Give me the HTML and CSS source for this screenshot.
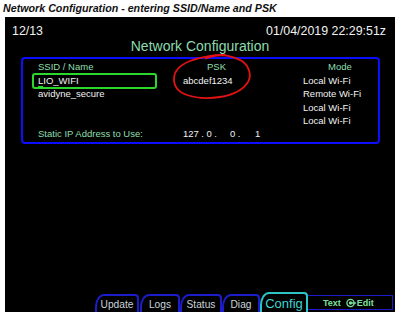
FILE: index.html
```html
<!DOCTYPE html>
<html lang="en">
<head>
    <meta charset="UTF-8">
    <meta name="viewport" content="width=device-width, initial-scale=1.0">
    <title>Network Configuration</title>
    <link rel="stylesheet" href="styles.css">
</head>
<body>

    <div class="caption">Network Configuration - entering SSID/Name and PSK</div>

    <div class="screen">
        <div class="topbar">
            <span>12/13</span>
            <span>01/04/2019 22:29:51z</span>
        </div>

        <div class="title">Network Configuration</div>

        <div class="panel">
            <div class="head">SSID / Name</div>
            <div class="head psk-head">PSK</div>
            <div class="head mode-head">Mode</div>

            <div><span class="sel"><span class="cursor">L</span>IO_WIFI</span></div>
            <div>abcdef1234</div>
            <div>Local Wi-Fi</div>

            <div>avidyne_secure</div>
            <div></div>
            <div>Remote Wi-Fi</div>

            <div></div>
            <div></div>
            <div>Local Wi-Fi</div>

            <div></div>
            <div></div>
            <div>Local Wi-Fi</div>

            <div class="label">Static IP Address to Use:</div>
            <div class="ip">
                <span>127</span><span>.</span><span>0</span><span>.</span><span class="far">0</span><span>.</span><span class="far last">1</span>
            </div>
            <div></div>
        </div>

        <!-- hand-drawn annotation around the PSK field -->
        <svg class="scribble" width="95" height="52" viewBox="0 0 95 52">
            <path d="M60,4 C50,3.5 35,6 25,10 C15,14 9,20 9,28 C9,36 13,41 22,44 C32,47.5 45,47.5 55,46 C68,44 78,39 83,31 C87,24 84,15 77,10 C70,6 62,3.5 52,4.5 C47,5 44,6 41,7.5"
                  fill="none" stroke="#e41212" stroke-width="1.8" stroke-linecap="round"/>
        </svg>

        <div class="tabs">
            <div class="tab t-update">Update</div>
            <div class="tab t-logs">Logs</div>
            <div class="tab t-status">Status</div>
            <div class="tab t-diag">Diag</div>
            <div class="tab active">Config</div>
            <div class="hint">
                <span>Text</span>
                <svg class="knob" width="10" height="10" viewBox="0 0 10 10">
                    <circle cx="4.5" cy="5" r="3.6" fill="none" stroke="#7ee09a" stroke-width="1.3"/>
                    <circle cx="4.5" cy="5" r="1.7" fill="#7ee09a"/>
                    <rect x="4.5" y="4.3" width="5.5" height="1.4" fill="#7ee09a"/>
                </svg>
                <span class="edit">Edit</span>
            </div>
        </div>
    </div>

</body>
</html>
```

FILE: styles.css
```css
body {
    margin: 0;
    background-color: #ffffff;
    font-family: "Liberation Sans", Arial, sans-serif;
}

.caption {
    height: 17px;
    box-sizing: border-box;
    padding: 1.5px 0 0 3px;
    font-size: 10.7px;
    line-height: 13px;
    font-weight: bold;
    font-style: italic;
    color: #111;
}

/* the black display */
.screen {
    position: relative;
    display: flex;
    flex-direction: column;
    margin-left: 5px;
    width: 390px;
    height: 295px;
    background-color: #000;
    color: #f2f2f2;
}

.topbar {
    display: flex;
    justify-content: space-between;
    padding: 6.5px 9px 0 7px;
    font-size: 12.4px;
    line-height: 14px;
}

.title {
    text-align: center;
    font-size: 14px;
    line-height: 16px;
    color: #8cdcae;
}

.panel {
    display: grid;
    grid-template-columns: 145px 120px auto;
    grid-auto-rows: 13.33px;
    grid-template-rows: 14px;
    margin: 3.5px 15px 0 16px;
    padding: 1px 0 1.5px 15px;
    border: 2px solid #0c0cff;
    border-radius: 4px;
    font-size: 9.5px;
    line-height: 13.33px;
}

.head {
    line-height: 14px;
    color: #8fdfae;
}

.psk-head {
    margin-left: 24px;
}

.mode-head {
    margin-left: 25px;
}

.label {
    color: #8fdfae;
}

.sel {
    position: relative;
}

/* green selection frame round the active entry */
.sel::after {
    content: "";
    position: absolute;
    left: -6px;
    top: -2px;
    width: 125px;
    height: 16px;
    box-sizing: border-box;
    border: 2px solid #2cd82c;
    border-radius: 3px;
}

.cursor {
    position: relative;
}

.cursor::after {
    content: "";
    position: absolute;
    left: 0;
    top: 10.5px;
    width: 5px;
    height: 1.5px;
    background-color: #2cd82c;
}

.ip {
    display: flex;
    gap: 2.5px;
}

.ip .far {
    margin-left: 10.5px;
}

.ip .last {
    margin-left: 12px;
}

.scribble {
    position: absolute;
    left: 160px;
    top: 34px;
}

/* bottom tab strip */
.tabs {
    display: flex;
    align-items: flex-end;
    height: 20px;
    margin-top: auto;
    padding-left: 90px;
}

.tab {
    height: 18px;
    box-sizing: border-box;
    padding-top: 3px;
    border: 2px solid #1c1cc8;
    border-bottom: none;
    border-radius: 9px 4px 0 0 / 13px 4px 0 0;
    text-align: center;
    font-size: 10.2px;
    line-height: 12px;
    color: #c8d4dc;
}

.t-update { width: 44px; }
.t-logs { width: 40px; margin-left: 1px; }
.t-status { width: 42px; }
.t-diag { width: 38px; }

.tab.active {
    width: 48px;
    height: 20px;
    border-color: #2ec4c4;
    font-size: 13px;
    line-height: 14px;
    color: #3fd6d6;
}

.hint {
    display: flex;
    align-items: center;
    align-self: flex-start;
    width: 85px;
    height: 15px;
    box-sizing: border-box;
    margin-top: 3px;
    padding-left: 15px;
    border: 1.5px solid #1c1cc8;
    border-left: none;
    font-size: 9px;
    font-weight: bold;
    color: #7ee09a;
}

.knob {
    margin-left: 5px;
}

.edit {
    margin-left: 1px;
}
```
